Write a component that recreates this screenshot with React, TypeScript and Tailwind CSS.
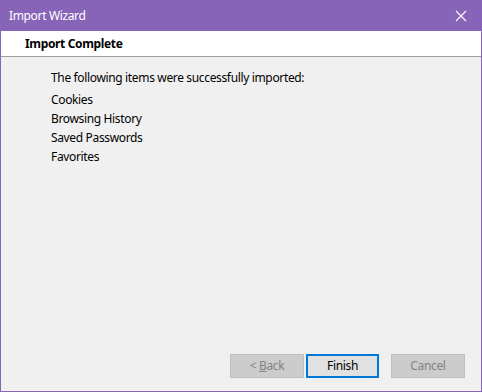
import React from "react";

const items = ["Cookies", "Browsing History", "Saved Passwords", "Favorites"];

function CloseIcon() {
  return (
    <svg width="12" height="12" viewBox="0 0 12 12" className="block">
      <path d="M1 1 L11 11 M11 1 L1 11" stroke="#ffffff" strokeWidth="1.1" />
    </svg>
  );
}

export default function App() {
  return (
    <div
      className="w-[482px] h-[392px] flex flex-col bg-[#8764b8] text-[12px] tracking-[-0.35px] text-black"
      style={{ fontFamily: '"Segoe UI", "Noto Sans", sans-serif' }}
    >
      <div className="h-[31px] flex items-center justify-between pl-[9px] pr-[15px] text-white">
        <span>Import Wizard</span>
        <CloseIcon />
      </div>
      <div className="flex-1 mx-[1px] mb-[1px] flex flex-col bg-[#f0f0f0]">
        <div className="h-[26px] bg-white border-b border-[#a0a0a0] flex items-center pl-[24px] font-bold">
          Import Complete
        </div>
        <div className="flex-1 flex flex-col pl-[50px] pt-[11px]">
          <div className="h-[19px] leading-[19px] mb-[3px]">
            The following items were successfully imported:
          </div>
          {items.map((it) => (
            <div key={it} className="h-[19px] leading-[19px]">
              {it}
            </div>
          ))}
        </div>
        <div className="flex justify-end pr-[16px] pb-[13px]">
          <button className="w-[74px] h-[24px] bg-[#cccccc] border border-[#bfbfbf] text-[#838383]">
            &lt; <span className="underline">B</span>ack
          </button>
          <button className="w-[73px] h-[24px] ml-[2px] bg-[#e1e1e1] border-2 border-[#0078d7]">
            Finish
          </button>
          <button className="w-[74px] h-[24px] ml-[12px] bg-[#cccccc] border border-[#bfbfbf] text-[#838383]">
            Cancel
          </button>
        </div>
      </div>
    </div>
  );
}
